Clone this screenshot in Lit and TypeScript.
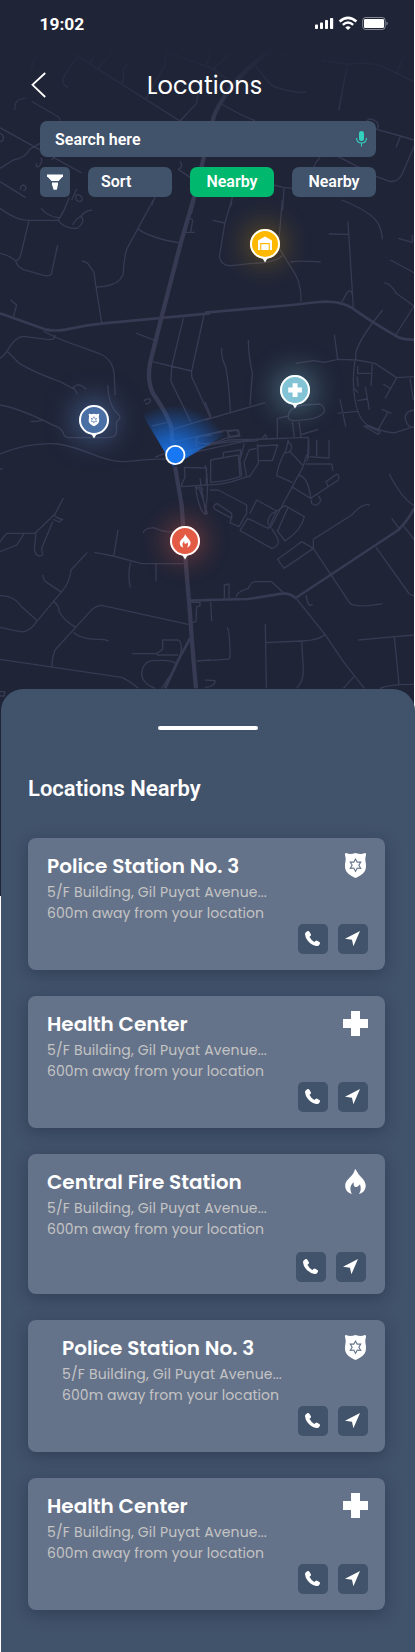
import { LitElement, html, svg, css } from "lit";
import { customElement, property } from "lit/decorators.js";

type Kind = "police" | "health" | "fire";

const glyph = (kind: Kind) =>
  kind === "police"
    ? svg`<path fill="currentColor" fill-rule="evenodd" d="M3.6 .2 C6 1.4 9 1.2 12.5 0 C16 1.2 19 1.4 21.4 .2 C22 -.1 23.4 .5 23 1.8 C22.6 4 21.9 6 22.6 9 C23.2 12 23.4 15.5 21.6 18.6 C19.6 21.8 15 24 12.5 25 C10 24 5.4 21.8 3.4 18.6 C1.6 15.5 1.8 12 2.4 9 C3.1 6 2.4 4 2 1.8 C1.6 .5 3 -.1 3.6 .2 Z M12.5 5 L10.5 8.6 L6.3 8.5 L8.5 12.2 L6.3 15.9 L10.5 15.8 L12.5 19.6 L14.5 15.8 L18.7 15.9 L16.5 12.2 L18.7 8.5 L14.5 8.6 Z M12.5 7.3 L13.9 9.8 L16.7 9.7 L15.2 12.2 L16.7 14.7 L13.9 14.6 L12.5 17.2 L11.1 14.6 L8.3 14.7 L9.8 12.2 L8.3 9.7 L11.1 9.8 Z"/>`
    : kind === "health"
      ? svg`<path fill="currentColor" d="M8 0H17V8H25V17H17V25H8V17H0V8H8Z"/>`
      : svg`<path fill="currentColor" d="M12 0 C13.6 1.3 14.3 3.5 15.6 5.2 C18.2 8.4 22.7 11.8 22.7 16.6 C22.7 20.8 20.3 24 16 25 C18.3 21.6 18 18.6 17 15.2 C15.6 17.4 13.8 18 12.2 18 C10.8 17.4 10.4 15.2 10.7 13.2 C8.2 15.4 7.4 17.4 7.4 19.6 C7.4 21.8 7.9 23.5 8.9 25 C4.6 23.8 2.2 20.8 2.2 16.8 C2.2 9.6 10.6 8 12 0 Z"/>`;

/** Street network, drawn in tiles at three units per pixel. */
const tile = (x: number, y: number, thin: string, mid = "", thick = "") => svg`
  <g transform="translate(${x} ${y}) scale(.33333)">
    <path class="thin" d=${thin}/><path class="mid" d=${mid}/><path class="thick" d=${thick}/>
  </g>`;

const streets = [
  tile(0, 0,
    `M95 203Q100 165 130 150 M195 145L540 363L590 310L595 270 M232 170L190 232Q184 256 205 262 M270 190Q290 160 275 145 M295 205L340 150 M388 193Q365 198 371 225L368 248 M500 155L495 195L437 297 M500 155L640 207L690 160L697 168 M620 193L632 150 M640 207L680 237 M763 193L800 240Q815 262 840 265Q880 278 920 277 M665 312Q720 345 765 362 M968 145L970 182L1040 192Q1130 185 1160 205L1242 245 M1042 194L1016 332 M1188 223L1222 150 M848 150Q850 175 870 160L880 145
     M45 330Q40 295 78 295 M95 304L160 342Q182 352 181 362 M0 383L245 519 M0 505L40 480Q75 475 90 447L120 430 M110 490Q105 505 118 498Q130 480 122 473 M0 400Q15 405 8 422L0 425 M0 545L77 593 M62 570Q60 555 72 555Q85 565 70 573 M165 470L155 480 M540 484Q552 500 535 508L570 532 M1100 363Q1110 350 1130 365Q1140 380 1130 388L1202 408L1242 420 M1202 408L1188 442 M1242 440L1205 525Q1190 550 1165 543L1130 530L1015 470 M960 472Q945 488 940 503 M215 600L230 566 M228 592Q225 580 240 586Q255 600 240 605Q225 602 228 592 M465 590L455 615 M697 590L692 620 M820 555L850 562L880 565 M852 562L848 630`,
    "", "M820 145Q720 215 672 292Q640 340 637 368 M612 470L570 640"),
  tile(0, 200,
    `M0 25Q50 62 85 61L175 61Q195 88 232 85Q258 65 243 48Q225 60 218 75 M243 48Q255 32 277 30 M123 25Q145 50 175 53L182 52 M175 61Q195 30 208 -8 M87 62L62 165Q58 180 47 182Q25 165 0 160 M47 182Q50 205 82 212L130 226Q150 230 154 222L173 135 M460 0L380 148Q370 185 370 220Q360 258 290 261 M415 88Q455 115 542 129 M245 184Q260 182 270 200Q285 215 284 235L305 368 M32 300L50 315L40 350
     M0 475Q12 468 20 455Q45 410 70 409L145 419Q168 420 165 405 M130 393Q175 418 240 440L300 462Q345 480 343 540L346 585 M23 455L57 490Q110 520 180 545L222 567 M232 582L220 562Q235 545 258 567 M323 556Q327 620 352 640Q368 650 350 665L349 700Q345 712 325 713H210Q190 712 190 698Q180 680 160 676Q60 625 0 615 M92 664L110 664 128 661 M407 399L465 421 M457 485L575 513L612 345 M550 355L515 500L513 545L572 665 M575 513L575 530L632 655 M432 605Q435 595 450 597Q455 610 436 612 M570 55L578 60L572 97H585 M553 97H580 M457 678L500 667 M518 688L632 653 M590 740Q580 710 610 708L635 705`,
    "M0 340L135 388Q165 395 200 388Q255 375 310 370L630 340",
    "M580 0L542 130 485 350L450 490Q440 550 462 585Q510 655 515 690L518 730"),
  tile(205, 200,
    `M80 0L60 68L43 170Q50 200 80 197L140 190Q210 188 232 167 M23 61L60 69 M232 0L220 140Q250 190 260 205Q290 245 288 305 M255 187Q270 180 347 186 M410 0Q500 35 520 72Q530 90 532 118 M429 65L445 322 M371 102L430 103 M410 307L428 275Q440 268 442 285 M580 115L622 127V105 M556 180L627 218 M538 248Q558 252 574 280L627 318L572 405 M533 330Q460 420 452 460V482 M388 404L398 478 M272 490Q300 485 327 482L357 487L400 478L455 480L510 490L575 533L627 530 M575 533L540 595 M535 552L558 567 M615 535L625 600 M450 482Q440 540 450 600Q460 660 490 676Q545 700 570 698L627 680 M458 498V520H498 M502 492L498 558 M481 560L493 630 M457 602L487 597 M449 567L460 578 M456 530L460 560 M475 678L520 703L525 695L480 676 M520 688L548 638 M530 628L560 640 M405 598L422 680 M397 640L457 634 M627 630Q598 635 601 655Q605 682 627 682
     M130 420Q130 465 142 520L135 617 M50 445Q48 475 62 500Q72 550 76 635 M0 660L180 608 M0 605L18 650 M250 650Q250 620 300 615L345 612Q360 620 358 635Q345 655 310 658L270 662Q250 662 250 650 M217 655L250 648 M217 655V715 M262 665L268 712 M282 665L288 712 M285 705L340 688 M172 715L180 704L188 718 M68 695L100 690L104 705L70 710Z`,
    "M0 338L260 315L340 306Q400 300 440 323Q490 360 570 406Q590 420 627 419"),
  tile(0, 440,
    `M0 42Q90 5 175 12C260 25 300 63 365 65C410 63 450 55 515 58 M465 52L500 38 M0 87H8 M190 174L165 222L105 280H20L0 305 M0 335L50 315L73 280 M162 225Q170 235 188 238L178 246L160 238 M158 245L125 325L128 345Q110 355 103 330L108 275 M430 280Q430 265 460 263Q500 280 520 274 M354 270L341 350 M283 337L340 348 425 371 550 371 M392 366Q382 400 391 443 M468 372V422 M262 337L213 390Q208 430 185 455Q135 515 110 545Q85 580 60 575L0 562 M128 405Q130 420 140 427L182 455 M0 467Q40 465 65 500L112 542 M160 485Q175 492 178 515Q190 540 227 562 M565 553L305 496Q285 497 270 515L165 630Q155 655 155 680 M220 577Q245 600 300 598Q320 598 326 604 M0 658L365 712Q385 720 415 745 M397 641H470L488 628V600H535Q550 610 540 650 M470 645H535 M465 745Q425 730 425 700Q430 660 465 662Q510 658 530 670 M485 745L508 710 M590 663L630 660 M570 550L588 545L590 500L600 498V487H570 M553 82L620 84L618 135L545 140V132L555 112Z M587 140L600 150 622 220Q610 225 602 205Q590 175 587 140 M600 115L618 225 M0 755H15L12 768H0`,
    "M570 595Q555 625 540 650L495 745 M570 482L630 480", "M525 80L545 195L555 340L570 520Q575 600 588 745"),
  tile(205, 440,
    `M17 60L100 45 105 110Q60 125 17 127Z M55 50V37L107 30L102 85 M0 135Q60 135 110 115L135 108L160 70L158 12 M118 10L105 60 110 110 M155 18L218 15 202 62H160 M118 65L132 30L155 25 M117 65L124 108 M250 0L243 30Q220 70 215 107L262 127 M240 38Q260 40 260 18L247 0 M255 35L293 75 M310 0L308 50L372 54V0 M335 0V48 M305 45L293 82L195 265 M300 72H380L384 93 M280 105Q310 110 317 175L263 142 M317 175L400 120Q405 108 396 102L363 125L370 142 M320 178Q315 195 335 196L348 182L340 167 M325 298L440 225Q475 185 495 196 M325 298V325L375 400L435 490Q450 505 533 491 M218 358L290 305L325 325L237 385Z M0 75Q15 130 0 225 M15 150H40L125 195V220L102 260L75 248L80 230 M35 190L80 220V235L30 208Q20 200 35 190 M135 220L155 180L215 213L190 265L128 235L105 272L200 325Q225 320 218 295L200 265 M190 255Q185 225 215 213L240 197L298 230Q290 270 240 303L215 270 M248 205L218 272 M553 102Q590 175 627 197 M560 235L582 265 M597 260L627 298 M513 322L613 462L627 468 M303 465Q308 490 312 495H323 M58 475V435L72 432V475 M93 472Q95 455 130 445Q140 425 150 425H200L235 458 M17 485L20 543 M67 562Q75 580 75 650Q75 660 60 658L0 662 M181 552L184 745 M181 608L290 603Q345 600 360 583 M290 603L295 690Q295 725 275 745 M275 477L360 583 415 665 478 745 M447 710L415 745 M460 600L570 590 627 585 M568 590L582 733 M525 745Q555 732 627 733 M0 720L30 722Q30 740 0 742 M0 15L60 8L158 -2L245 -5`,
    "M0 480L130 477L235 460Q255 460 272 474L580 270Q610 240 627 205"),
  tile(135, 390,
    `M105 145Q105 165 120 155L265 122L305 120L315 138L270 145Q230 165 195 160Q170 150 195 138L265 125 M275 120L285 140 M120 195L280 150L520 142Q525 190 515 215 M190 290L205 300 M120 200L185 185 325 155 370 152`),
];

@customElement("city-map")
class CityMap extends LitElement {
  static styles = css`
    :host { display: block; }
    svg { display: block; width: 100%; height: 100%; }
    path { fill: none; stroke: #373a52; stroke-linejoin: round; }
    .thin { stroke-width: 4; }
    .mid { stroke-width: 8; }
    .thick { stroke-width: 13; }
    .beam { fill: url(#beam); stroke: none; }
  `;
  render() {
    return html`<svg viewBox="0 0 414 896">
      <defs>
        <linearGradient id="fade" x1="0" y1="0" x2="0" y2="1">
          <stop offset=".35" stop-color="#1f2437"/><stop offset="1" stop-color="#1f2437" stop-opacity="0"/>
        </linearGradient>
        <radialGradient id="beam" gradientUnits="userSpaceOnUse" cx="173" cy="466" r="61">
          <stop offset=".2" stop-color="#1877f2" stop-opacity=".92"/><stop offset=".5" stop-color="#1877f2" stop-opacity=".62"/>
          <stop offset=".75" stop-color="#1877f2" stop-opacity=".3"/><stop offset="1" stop-color="#1877f2" stop-opacity="0"/>
        </radialGradient>
      </defs>
      <rect width="414" height="896" fill="#1f2437"/>
      ${streets}
      <rect width="414" height="130" fill="url(#fade)"/>
      <path class="beam" d="M173 466L143 415.5L150 404H222L226 434.5Z"/>
      <circle cx="175.3" cy="455" r="9.2" fill="#1877f2" stroke="#fff" stroke-width="1.8"/>
    </svg>`;
  }
}

@customElement("map-pin")
class MapPin extends LitElement {
  @property() kind = "police";
  static styles = css`
    :host { display: block; width: 30px; height: 34px; color: #fff; }
    svg { display: block; overflow: visible; position: relative; }
    .glow { width: 30px; height: 30px; border-radius: 50%; position: absolute; }
    .police { background: #4a6fa5; box-shadow: 0 0 28px 6px #5c82ba8c; }
    .health { background: #82c4d5; box-shadow: 0 0 28px 6px #82c4d566; }
    .fire { background: #e35b45; box-shadow: 0 0 26px 4px #e35b4570; }
    .garage { background: #ffb800; box-shadow: 0 0 28px 5px #ffb8004a; }
  `;
  render() {
    return html`<div class="glow ${this.kind}"></div>
      <svg width="30" height="34">
        <path d="M12 28.5L15 33.5L18 28.5Z" fill="#fff"/>
        <circle cx="15" cy="15" r="14" fill="none" stroke="#fff" stroke-width="2"/>
        ${this.kind === "garage"
          ? svg`<path d="M8 21V11.5L15 7.5L22 11.5V21H19.8V14H10.2V21Z" fill="#fff"/><path d="M11.3 15.2H18.7V21H11.3Z" fill="#fff"/>`
          : this.kind === "fire"
            ? svg`<g transform="translate(8.6 8.3) scale(.53)">${glyph("fire")}</g>`
            : this.kind === "health"
              ? svg`<g transform="translate(8.2 8.2) scale(.55)">${glyph("health")}</g>`
              : svg`<g transform="translate(8.7 8.7) scale(.5)">${glyph("police")}</g>`}
      </svg>`;
  }
}

@customElement("place-card")
class PlaceCard extends LitElement {
  @property() kind: Kind = "police";
  @property() heading = "";
  @property() variant = "";
  static styles = css`
    :host { display: block; }
    .card {
      box-sizing: border-box; height: 132px; padding: 15px 17px 16px 19px; border-radius: 8px;
      background: #65738a; box-shadow: 0 4px 15px rgba(20, 28, 48, .34);
      display: flex; flex-direction: column; justify-content: space-between; color: #fff;
    }
    .tall { height: 140px; padding-bottom: 12px; }
    .tall .actions { padding-right: 2px; }
    .shifted .copy { padding-left: 15px; }
    .top { display: flex; justify-content: space-between; align-items: flex-start; height: 71px; }
    .top > svg { display: block; flex: none; }
    .copy { font-family: Poppins, Inter, sans-serif; white-space: nowrap; }
    h3 { margin: -2px 0 0; font-size: 20px; line-height: 30px; font-weight: 600; }
    p { margin: 0; font-size: 14px; line-height: 21px; color: #c4c4c4; }
    .addr { margin-top: 1px; letter-spacing: .16px; }
    .dist { letter-spacing: .07px; }
    .actions { display: flex; gap: 10px; justify-content: flex-end; }
    .btn { width: 30px; height: 30px; border-radius: 5px; background: #41526b; display: grid; place-items: center; }
    .btn svg { display: block; }
  `;
  render() {
    return html`<article class="card ${this.variant}">
      <div class="top">
        <div class="copy">
          <h3>${this.heading}</h3>
          <p class="addr">5/F Building, Gil Puyat Avenue...</p>
          <p class="dist">600m away from your location</p>
        </div>
        <svg width="25" height="25" overflow="visible">${glyph(this.kind)}</svg>
      </div>
      <div class="actions">
        <div class="btn"><svg width="30" height="30"><path fill="#fff" d="M8 8.3L9.6 7.1Q10.6 6.6 11.2 7.6L12.9 10.2Q13.3 11.2 12.5 11.9L11.4 12.8Q12.9 15.8 16.3 18L17.5 16.9Q18.3 16.3 19.2 16.8L21.4 18.1Q22.3 18.7 22 19.6L21 21.3Q20.3 22.2 18.6 22Q13.8 21.3 10 16.9Q7.2 13.5 7 10.2Q7 9 8 8.3Z"/></svg></div>
        <div class="btn"><svg width="30" height="30"><path fill="#fff" d="M22 7L15.4 22.3L14 15.8L7 14.7Z"/></svg></div>
      </div>
    </article>`;
  }
}

@customElement("app-root")
class AppRoot extends LitElement {
  static styles = css`
    :host { display: block; width: 415px; height: 1652px; background: #fff; position: relative; overflow: hidden; font-family: Roboto, sans-serif; color: #fff; }
    city-map { position: absolute; left: 0; top: 0; width: 414px; height: 896px; }
    .pin { position: absolute; }
    .p-garage { left: 250px; top: 229px; }
    .p-health { left: 280px; top: 375px; }
    .p-police { left: 79px; top: 405px; }
    .p-fire { left: 170px; top: 526px; }
    .screen { position: relative; height: 689px; display: flex; flex-direction: column; }
    .status { height: 47px; display: flex; justify-content: space-between; padding: 0 25px 0 39.5px; }
    .time { font-size: 17.4px; line-height: 48px; font-weight: 700; }
    .status svg { display: block; margin-top: 16px; }
    .nav { height: 74px; display: flex; align-items: center; padding-left: 31px; }
    .nav svg { display: block; margin-top: 1px; }
    h1 { margin: 3px 0 0 100px; font-family: Poppins, Inter, sans-serif; font-size: 24px; line-height: 36px; font-weight: 400; letter-spacing: .1px; }
    .search { margin: 0 39px 0 40px; height: 36px; border-radius: 7px; background: #41526b; display: flex; align-items: center; justify-content: space-between; padding: 0 8px 0 15px; font-size: 16px; font-weight: 600; }
    .filters { margin: 10px 39px 0 40px; display: flex; justify-content: space-between; height: 30px; font-size: 16px; line-height: 30px; font-weight: 600; }
    .chip { width: 84px; box-sizing: border-box; border-radius: 7px; background: #41526b; text-align: center; }
    .sort { text-align: left; padding-left: 13px; }
    .on { background: #00b86e; }
    .square { width: 30px; border-radius: 5px; }
    .square svg { display: block; }
    .sheet { position: relative; box-sizing: border-box; margin-left: 1px; height: 963px; border-radius: 22px 22px 0 0; background: #41526b; padding: 37px 30px 0 27px; display: flex; flex-direction: column; }
    .grip { width: 100px; height: 4px; border-radius: 2px; background: #fff; margin-left: 130px; }
    h2 { margin: 45px 0 35px; font-size: 22px; line-height: 28px; font-weight: 600; height: 28px; }
    .list { display: grid; gap: 26px; margin-top: 0; }
  `;
  render() {
    return html`
      <city-map></city-map>
      <map-pin class="pin p-garage" kind="garage"></map-pin>
      <map-pin class="pin p-health" kind="health"></map-pin>
      <map-pin class="pin p-police" kind="police"></map-pin>
      <map-pin class="pin p-fire" kind="fire"></map-pin>
      <div class="screen">
        <div class="status">
          <span class="time">19:02</span>
          <svg width="75" height="16" fill="#fff">
            <rect x="0" y="8.5" width="3" height="4.5" rx=".8"/><rect x="5" y="6.5" width="3" height="6.5" rx=".8"/><rect x="10" y="4" width="3" height="9" rx=".8"/><rect x="15" y="2" width="3.2" height="11" rx=".8"/>
            <path d="M24.6 5.5Q33 -1.8 41.4 5.5" fill="none" stroke="#fff" stroke-width="2.5"/>
            <path d="M27.8 8.8Q33 4.4 38.2 8.8" fill="none" stroke="#fff" stroke-width="2.4"/>
            <path d="M30.3 11.4Q33 9.2 35.7 11.4L33 14Z"/>
            <rect x="47.7" y="1.5" width="22.5" height="12" rx="3" fill="none" stroke="#fff" stroke-opacity=".45"/>
            <rect x="49" y="3" width="20" height="9" rx="1.2"/><path d="M71.5 5.5Q74 7.3 71.5 9.5Z" fill-opacity=".5"/>
          </svg>
        </div>
        <div class="nav">
          <svg width="16" height="26"><path d="M14.2 1L1.5 12.8L14.2 25" fill="none" stroke="#fff" stroke-width="1.8"/></svg>
          <h1>Locations</h1>
        </div>
        <div class="search"><span>Search here</span>
          <svg width="13" height="16" fill="#34d1bf"><rect x="4" y="0" width="5" height="10" rx="2.5"/><path d="M1.5 7Q1.8 12 6.5 12T11.5 7M6.5 12V15.5" fill="none" stroke="#34d1bf" stroke-width="1.1"/></svg>
        </div>
        <div class="filters">
          <div class="chip square"><svg width="30" height="30" fill="#fff"><path d="M7 7.5H23V9.3L18.6 14H11.5L7 9.3Z"/><path d="M12 15.4H18V17.5L16.8 22.7H13.6L12 17.5Z"/></svg></div>
          <div class="chip sort">Sort</div>
          <div class="chip on">Nearby</div>
          <div class="chip">Nearby</div>
        </div>
      </div>
      <section class="sheet">
        <div class="grip"></div>
        <h2>Locations Nearby</h2>
        <div class="list">
          <place-card kind="police" heading="Police Station No. 3"></place-card>
          <place-card kind="health" heading="Health Center"></place-card>
          <place-card kind="fire" heading="Central Fire Station" variant="tall"></place-card>
          <place-card kind="police" heading="Police Station No. 3" variant="shifted"></place-card>
          <place-card kind="health" heading="Health Center"></place-card>
        </div>
      </section>`;
  }
}
